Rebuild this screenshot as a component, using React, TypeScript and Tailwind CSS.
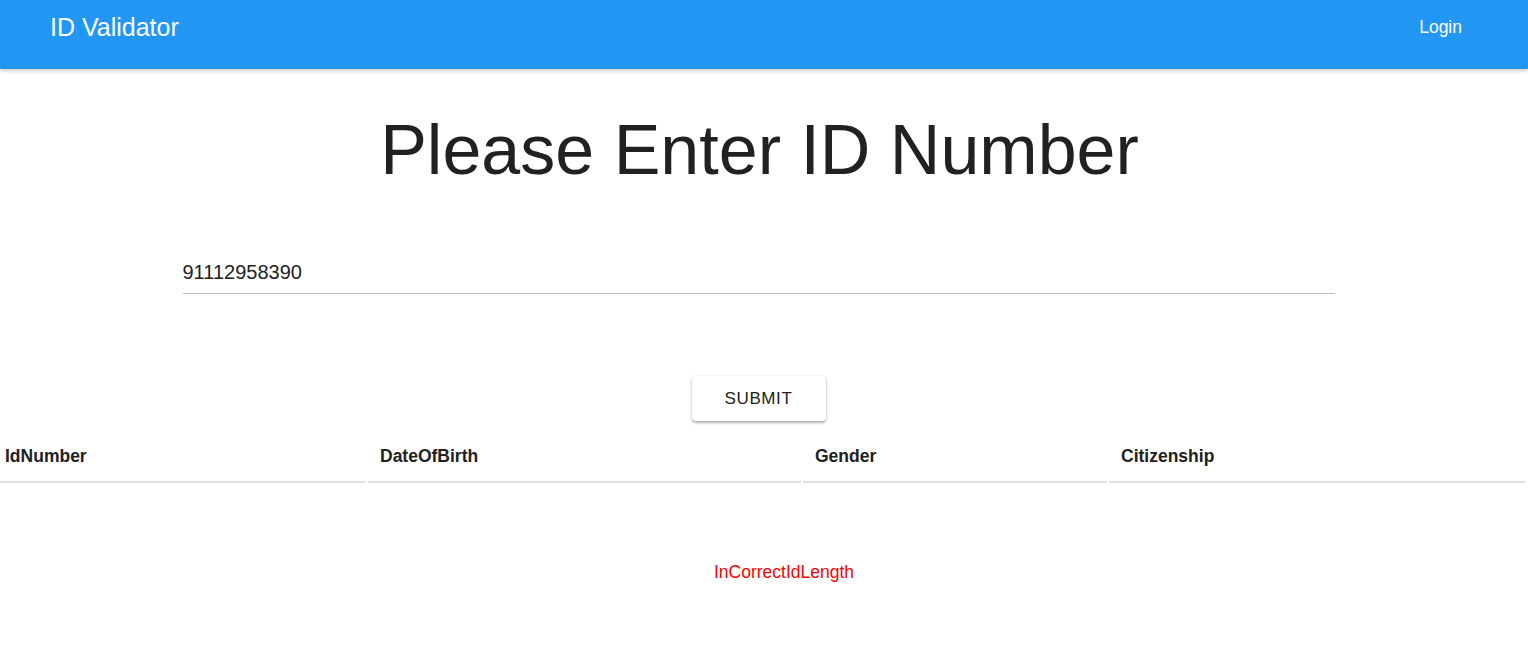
import React from "react";

export default function App() {
  const font = { fontFamily: '"Liberation Sans", Arial, sans-serif' };
  return (
    <div className="min-h-[653px] bg-white text-[#212121]" style={font}>
      <header className="h-[69px] bg-[#2196f3] shadow-[0_2px_4px_rgba(0,0,0,0.2)] flex items-start justify-between pl-[50px] pr-[66px] pt-[12px] relative z-10">
        <div className="text-white text-[25px] leading-[30px]">ID Validator</div>
        <div className="text-white text-[17.5px] leading-[30px]">Login</div>
      </header>
      <main className="flex flex-col items-center pr-[11px]">
        <h1 className="text-[70px] leading-[80px] mt-[41px] ml-[2px] font-normal">Please Enter ID Number</h1>
        <div className="mt-[70px] w-[1152px] border-b border-[#bdbdbd] pb-[9px]">
          <div className="text-[20px] leading-[24px]">91112958390</div>
        </div>
        <button className="mt-[82px] w-[134px] h-[45px] rounded-[4px] bg-white shadow-[0_2px_3px_rgba(0,0,0,0.3),0_0_2px_rgba(0,0,0,0.1)] text-[17px] tracking-[0.6px] text-[#212121]">
          SUBMIT
        </button>
      </main>
      <div className="flex gap-[2px] mt-[11px] pr-[3px]">
        {[
          ["IdNumber", "w-[366px]", "pl-[5px]"],
          ["DateOfBirth", "w-[433px]", "pl-[12px]"],
          ["Gender", "w-[304px]", "pl-[12px]"],
          ["Citizenship", "w-[416px]", "pl-[12px]"],
        ].map(([t, w, p]) => (
          <div key={t} className={`${w} ${p} h-[51px] border-b-2 border-[#e0e0e0] flex items-center pb-[1px] font-bold text-[17.5px]`}>
            {t}
          </div>
        ))}
      </div>
      <div className="mt-[79px] text-center pl-[40px] text-[#ff0000] text-[17.5px] leading-[20px]">InCorrectIdLength</div>
    </div>
  );
}
